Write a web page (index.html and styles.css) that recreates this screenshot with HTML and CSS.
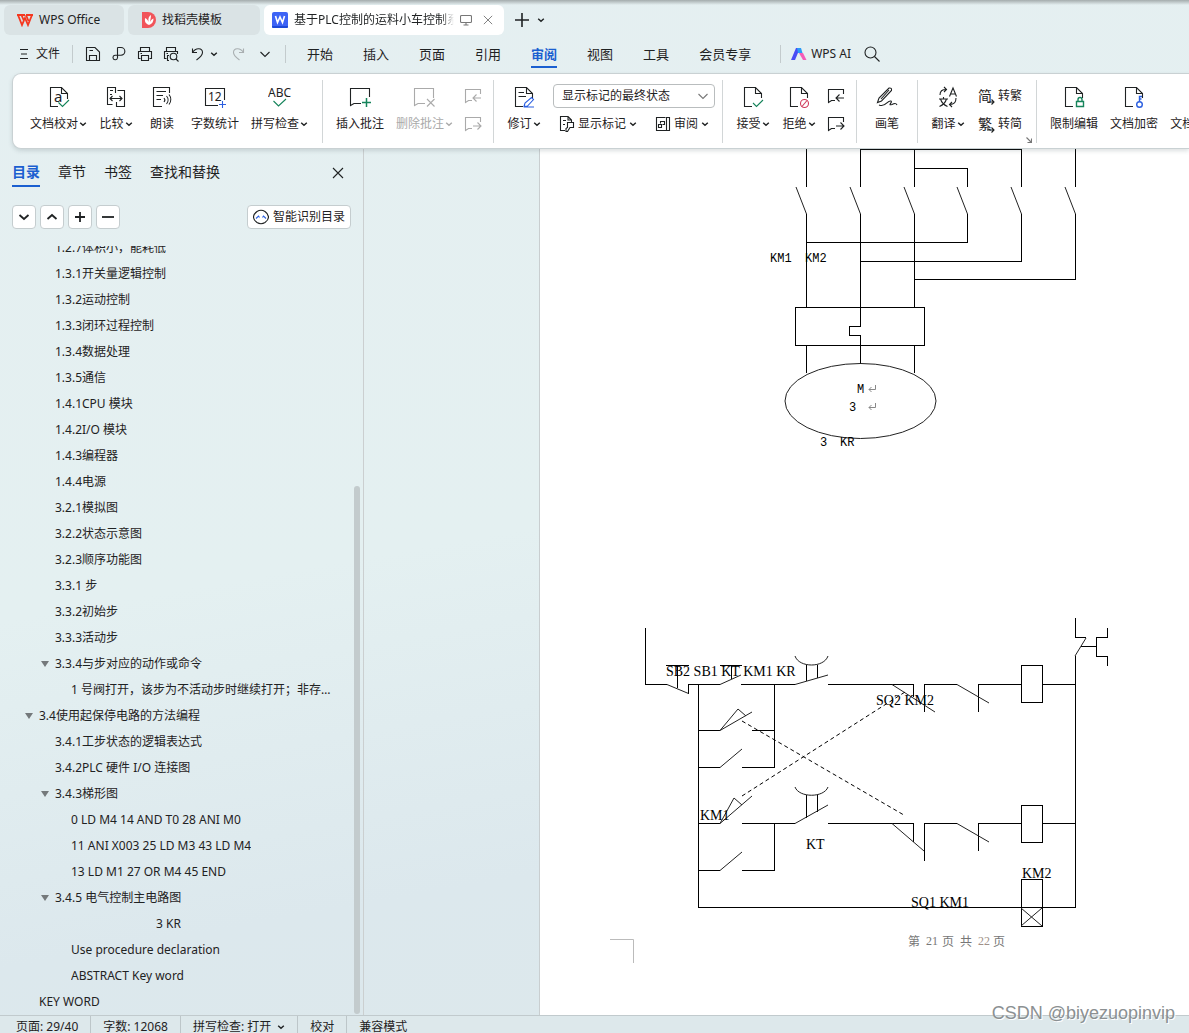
FILE: index.html
```
<!DOCTYPE html>
<html lang="zh-CN">
<head>
  <meta charset="UTF-8" />
  <meta name="viewport" content="width=device-width, initial-scale=1" />
  <title>基于PLC控制的运料小车控制系统 - WPS Office</title>
  <link rel="stylesheet" href="styles.css">
</head>
<body>

  <!-- Shared icons -->
  <svg class="sprite" aria-hidden="true">
    <symbol id="chev" viewBox="0 0 8 8"><path d="M1.2 2.8 4 5.2 6.8 2.8" stroke-width="1.5"/></symbol>
    <symbol id="chev-lg" viewBox="0 0 12 12"><path d="M1.5 4 6 8.5 10.500 4"/></symbol>
    <symbol id="close" viewBox="0 0 12 12"><path d="M1 1 11 11M11 1 1 11"/></symbol>
    <symbol id="doc" viewBox="0 0 24 24"><path d="M11 21.500H3.500V2.500H14.500L20.500 8.500V13M14.500 2.500V8.500H20.500"/></symbol>
    <symbol id="note-prev" viewBox="0 0 18 18"><path d="M16.500 7V2.500H1.500V15.500L4.500 13.500H8M17 11H9.500M12.500 7.500 9 11 12.500 14.500"/></symbol>
    <symbol id="note-next" viewBox="0 0 18 18"><path d="M16.500 7V2.500H1.500V15.500L4.500 13.500H8M9 11H16.500M13.500 7.500 17 11 13.500 14.500"/></symbol>
  </svg>

  <header>
    <div class="tabs">
      <button class="tab tab-home">
        <svg width="16" height="14" viewBox="0 0 16 14"><path d="M0 2H8M9 2H16M1 2 5 12 8 5 11 12 15 2M4.500 2 7 8M9 2 11.500 8" fill="none" stroke="#f5371f" stroke-width="1.800"/></svg>
        WPS Office
      </button>
      <button class="tab tab-tpl">
        <svg width="14" height="16" viewBox="0 0 14 16"><path d="M0 0H6A8 8 0 0 1 6 16H0Z" fill="#f1545a"/><path d="M7 13C2 11 3 8 3 6 5 7 6 8 6.500 10 6 6 7 4 9 3 9 5 8.500 7 8 10 9 8 10 7 11.500 6.500 11.500 10 10 12 7 13Z" fill="#fff"/></svg>
        找稻壳模板
      </button>
      <div class="tab tab-file">
        <svg width="16" height="16" viewBox="0 0 16 16"><rect width="16" height="16" rx="2" fill="#3d63f5"/><path d="M0 14H16V15A1 1 0 0 1 15 16H1A1 1 0 0 1 0 15Z" fill="#1d49d8"/><path d="M3.500 4 5.500 10.500 8 5 10.500 10.500 12.500 4" fill="none" stroke="#fff" stroke-width="1.600"/></svg>
        <span class="tab-name">基于PLC控制的运料小车控制系统</span>
        <svg class="ico muted" width="12" height="12" viewBox="0 0 12 12"><rect x="0.500" y="1.500" width="11" height="7" rx="1"/><path d="M6 8.500V11M3.500 11H8.500"/></svg>
        <button class="plain muted" aria-label="关闭标签"><svg class="ico" width="10" height="10"><use href="#close"/></svg></button>
      </div>
      <button class="plain add" aria-label="新建"><svg class="ico" width="14" height="14" viewBox="0 0 14 14"><path d="M7 0V14M0 7H14" stroke-width="1.600"/></svg></button>
      <button class="plain" aria-label="标签列表"><svg class="ico" width="8" height="8"><use href="#chev"/></svg></button>
    </div>

    <nav class="menu">
      <button class="plain file">
        <svg class="ico" width="10" height="12" viewBox="0 0 10 12"><path d="M1 1.500H9M2 6H8M1 10.500H9"/></svg>
        文件
      </button>
      <div class="quick">
        <button class="plain" aria-label="保存"><svg class="ico" width="16" height="16" viewBox="0 0 16 16"><path d="M1.500 14.500V1.500H10L14.500 6V14.500ZM4.500 14.500V9.500H11.500V14.500M4.500 4.500H8"/></svg></button>
        <button class="plain" aria-label="输出为PDF"><svg class="ico" width="16" height="16" viewBox="0 0 16 16"><path d="M6.500 1.500H10A3.800 3.800 0 0 1 10 9.200H4A2.300 2.300 0 1 0 6.500 12V1.500"/></svg></button>
        <button class="plain" aria-label="打印"><svg class="ico" width="16" height="16" viewBox="0 0 16 16"><path d="M3.500 5V1.500H12.500V5M3.500 12.500H1.500V5.500H14.500V12.500H12.500M4.500 9.500H11.500V14.500H4.500ZM3.500 7.500H5"/></svg></button>
        <button class="plain" aria-label="打印预览"><svg class="ico" width="16" height="16" viewBox="0 0 16 16"><path d="M3.500 5V1.500H12.500V5M3.500 12.500H1.500V5.500H14.500V8M3.500 7.500H5M6 14.500H4.500V9.500H6"/><circle cx="10.500" cy="10.500" r="3.300"/><path d="M13 13 15.500 15.500"/></svg></button>
        <button class="plain undo" aria-label="撤销"><svg class="ico" width="14" height="14" viewBox="0 0 14 14"><path d="M1.500 1.500V5.500H6M1.500 5.500C5 0 11.500 1 11.500 5.500 11.500 8 9 10.500 5.500 13"/></svg><svg class="ico" width="8" height="8"><use href="#chev"/></svg></button>
        <button class="plain redo" aria-label="恢复"><svg class="ico" width="14" height="14" viewBox="0 0 14 14"><path d="M12.500 1.500V5.500H8M12.500 5.500C9 0 2.500 1 2.500 5.500 2.500 8 5 10.500 8.500 13"/></svg></button>
        <button class="plain" aria-label="自定义"><svg class="ico" width="12" height="12"><use href="#chev-lg"/></svg></button>
      </div>
      <div class="menu-tabs">
        <a href="#">开始</a><a href="#">插入</a><a href="#">页面</a><a href="#">引用</a><a href="#" class="active">审阅</a><a href="#">视图</a><a href="#">工具</a><a href="#">会员专享</a>
      </div>
      <button class="plain ai">
        <svg width="16" height="12" viewBox="0 0 16 12"><path d="M5 0H9L4 12H0Z" fill="#4a4cf5"/><path d="M6 0H10L11.500 5H7Z" fill="#2a9cf7"/><path d="M8 5H12L15.500 12H12Z" fill="#f45cb8"/></svg>
        WPS AI
      </button>
      <button class="plain" aria-label="搜索"><svg class="ico" width="18" height="18" viewBox="0 0 18 18"><circle cx="7.500" cy="7.500" r="5.500"/><path d="M11.500 11.500 16.500 16.500"/></svg></button>
    </nav>
  </header>

  <section class="ribbon">
    <div class="group proof">
      <button class="tool"><svg class="ico" width="24" height="24" viewBox="0 0 24 24"><path d="M11 21.500H3.500V2.500H14.500L20.500 8.500V14M14.500 2.500V8.500H20.500"/><text x="7" y="17" class="ico-text a">a</text><path class="green" d="M11.500 17.500 15.500 21.500 22 15"/></svg><span>文档校对<svg class="ico" width="8" height="8"><use href="#chev"/></svg></span></button>
      <button class="tool"><svg class="ico" width="24" height="24" viewBox="0 0 24 24"><path d="M11.500 8V2.500H3.500V19.500H8.500M12.500 17V21.500H20.500V5.500H13.500M6 5.500H9M6 9.500H8M6 13.500H18M8.500 11 6 13.500 8.500 16M15.500 11 18 13.500 15.500 16"/></svg><span>比较<svg class="ico" width="8" height="8"><use href="#chev"/></svg></span></button>
      <button class="tool"><svg class="ico" width="24" height="24" viewBox="0 0 24 24"><path d="M12 21.500H3.500V2.500H19.500V8M6.500 6.500H16M6.500 10.500H13M6.500 14.500H11M14 13A3 3 0 0 1 14 17M16.500 11A6 6 0 0 1 16.500 19M19 9.500A8 8 0 0 1 19 19.500"/></svg><span>朗读</span></button>
      <button class="tool"><svg class="ico" width="24" height="24" viewBox="0 0 24 24"><path d="M15 20.500H2.500V3.500H21.500V15"/><text x="5" y="16" class="ico-text">12</text><path class="blue" d="M19.500 16V23M16 19.500H23"/></svg><span>字数统计</span></button>
      <button class="tool"><svg class="ico" width="24" height="24" viewBox="0 0 24 24"><text x="0" y="12" class="ico-text">ABC</text><path class="green" d="M5.500 16 10.500 21 18 14"/></svg><span>拼写检查<svg class="ico" width="8" height="8"><use href="#chev"/></svg></span></button>
    </div>

    <div class="group">
      <button class="tool"><svg class="ico" width="24" height="24" viewBox="0 0 24 24"><path d="M21.500 12V3.500H2.500V20.500L6 18.500H13"/><path class="green" stroke-width="1.500" d="M18.500 13V22M14 17.500H23"/></svg><span>插入批注</span></button>
      <button class="tool off" disabled><svg class="ico" width="24" height="24" viewBox="0 0 24 24"><path d="M20.500 13V3.500H1.500V20.500L5 18.500H12M14 14 21.500 21.500M21.500 14 14 21.500"/></svg><span>删除批注<svg class="ico" width="8" height="8"><use href="#chev"/></svg></span></button>
      <div class="stack off">
        <button class="plain" disabled aria-label="上一条批注"><svg class="ico" width="18" height="18"><use href="#note-prev"/></svg></button>
        <button class="plain" disabled aria-label="下一条批注"><svg class="ico" width="18" height="18"><use href="#note-next"/></svg></button>
      </div>
    </div>

    <div class="group">
      <button class="tool"><svg class="ico" width="24" height="24" viewBox="0 0 24 24"><use href="#doc"/><path d="M6.500 7.500H12M6.500 11.500H14"/><path class="blue" d="M12 21.500 13 18 19.500 12.500 21.500 14.500 15.500 21ZM12 22H22"/></svg><span>修订<svg class="ico" width="8" height="8"><use href="#chev"/></svg></span></button>
      <div class="markup">
        <div class="select-box">
          <select aria-label="标记显示方式"><option>显示标记的最终状态</option></select>
          <svg class="ico muted" width="12" height="12"><use href="#chev-lg"/></svg>
        </div>
        <div class="markup-row">
          <button class="plain"><svg class="ico" width="16" height="16" viewBox="0 0 16 16"><path d="M6 14.500H1.500V0.500H9L12.500 4V6M9 0.500V4H12.500M4 4.500H7M4 8.500H6M8.500 6.500H14.500V11.500H11L8.500 15.500H7V12.500L8.500 11.500Z"/></svg>显示标记<svg class="ico" width="8" height="8"><use href="#chev"/></svg></button>
          <button class="plain"><svg class="ico" width="16" height="16" viewBox="0 0 16 16"><path d="M10.500 1.500H1.500V14.500H14.500V1.500H11.500V14.500M5.500 7.500V5.500H9.500V8.500H7.500M3.500 8.500H6.500V11.500H3.500Z"/></svg>审阅<svg class="ico" width="8" height="8"><use href="#chev"/></svg></button>
        </div>
      </div>
    </div>

    <div class="group">
      <button class="tool"><svg class="ico" width="24" height="24" viewBox="0 0 24 24"><use href="#doc"/><path class="green" d="M12 18 15.500 21.500 22 15"/></svg><span>接受<svg class="ico" width="8" height="8"><use href="#chev"/></svg></span></button>
      <button class="tool"><svg class="ico" width="24" height="24" viewBox="0 0 24 24"><use href="#doc"/><g class="red"><circle cx="17.500" cy="18.500" r="4"/><path d="M15 21.500 20 15.500"/></g></svg><span>拒绝<svg class="ico" width="8" height="8"><use href="#chev"/></svg></span></button>
      <div class="stack">
        <button class="plain" aria-label="上一条修订"><svg class="ico" width="18" height="18"><use href="#note-prev"/></svg></button>
        <button class="plain" aria-label="下一条修订"><svg class="ico" width="18" height="18"><use href="#note-next"/></svg></button>
      </div>
    </div>

    <div class="group">
      <button class="tool"><svg class="ico" width="24" height="24" viewBox="0 0 24 24"><path d="M2.500 17.500 4 13 14 3Q17 2.500 16.500 5.500L6.500 16ZM6 14 14 5M4 20C11 23 12 15 16 16 18 17 12 21 17 19.500 20 18 21 18 22 20"/></svg><span>画笔</span></button>
    </div>

    <div class="group">
      <button class="tool"><svg class="ico" width="24" height="24" viewBox="0 0 24 24"><path d="M4 10C4 6 6 4.500 10 4.500M8 2 10.500 4.500 8 7M20 13C20 18 18 19.500 14 19.500M16 17 13.500 19.500 16 22M13.500 11.500 17 3 20.500 11.500M14.500 9H19.500M3 14H12M7.500 12V14M10.500 14Q9 19 3.500 21.500M4.500 14Q6 19 11.500 21.500"/></svg><span>翻译<svg class="ico" width="8" height="8"><use href="#chev"/></svg></span></button>
      <div class="stack convert">
        <button class="plain"><span class="glyph">简<svg class="ico" width="8" height="6" viewBox="0 0 8 6"><path d="M0 3H7M4.500 0.500 7 3 4.500 5.500"/></svg></span>转繁</button>
        <button class="plain"><span class="glyph">繁<svg class="ico" width="8" height="6" viewBox="0 0 8 6"><path d="M0 3H7M4.500 0.500 7 3 4.500 5.500"/></svg></span>转简</button>
      </div>
      <button class="plain launcher muted" aria-label="更多选项"><svg class="ico" width="6" height="6" viewBox="0 0 6 6"><path d="M0.500 0.500 5 5M5.500 1.500V5.500H1.500"/></svg></button>
    </div>

    <div class="group">
      <button class="tool"><svg class="ico" width="24" height="24" viewBox="0 0 24 24"><use href="#doc"/><path class="green lock" d="M14.500 16.500H21.500V21.500H14.500ZM16 16.500V14.500A2 2 0 0 1 20 14.500V16.500"/></svg><span>限制编辑</span></button>
      <button class="tool"><svg class="ico" width="24" height="24" viewBox="0 0 24 24"><use href="#doc"/><g class="blue lock"><circle cx="17.500" cy="19.500" r="2.800"/><path d="M17.500 16.500V11.500H20M17.500 14H19.500"/></g></svg><span>文档加密</span></button>
      <button class="tool"><svg class="ico" width="24" height="24" viewBox="0 0 24 24"></svg><span>文档定稿</span></button>
    </div>
  </section>

  <main>
    <aside>
      <div class="side-tabs">
        <a href="#" class="active">目录</a><a href="#">章节</a><a href="#">书签</a><a href="#">查找和替换</a>
        <button class="plain" aria-label="关闭"><svg class="ico" width="12" height="12"><use href="#close"/></svg></button>
      </div>
      <div class="side-tools">
        <button aria-label="展开"><svg class="ico" width="12" height="12" viewBox="0 0 12 12"><path d="M1.500 4 6 8 10.500 4"/></svg></button>
        <button aria-label="收起"><svg class="ico" width="12" height="12" viewBox="0 0 12 12"><path d="M1.500 8 6 4 10.500 8"/></svg></button>
        <button aria-label="增加级别"><svg class="ico" width="12" height="12" viewBox="0 0 12 12"><path d="M6 1V11M1 6H11"/></svg></button>
        <button aria-label="减少级别"><svg class="ico" width="12" height="12" viewBox="0 0 12 12"><path d="M0 6H12"/></svg></button>
        <button class="smart"><svg class="ico" width="16" height="16" viewBox="0 0 16 16"><path d="M4 2.500Q8 0 12 2.500 15.500 5 15.500 8 15.500 11 12 13.500 8 16 4 13.500 0.500 11 0.500 8 0.500 5 4 2.500Z"/><path class="blue" d="M3 9.500 5.500 7 6.500 8.500M9.500 8.500 10.500 7 13 9.500"/></svg>智能识别目录</button>
      </div>
      <div class="toc">
        <ul>
          <li class="l3"><a href="#">1.2.7体积小，能耗低</a></li>
          <li class="l3"><a href="#">1.3.1开关量逻辑控制</a></li>
          <li class="l3"><a href="#">1.3.2运动控制</a></li>
          <li class="l3"><a href="#">1.3.3闭环过程控制</a></li>
          <li class="l3"><a href="#">1.3.4数据处理</a></li>
          <li class="l3"><a href="#">1.3.5通信</a></li>
          <li class="l3"><a href="#">1.4.1CPU 模块</a></li>
          <li class="l3"><a href="#">1.4.2I/O 模块</a></li>
          <li class="l3"><a href="#">1.4.3编程器</a></li>
          <li class="l3"><a href="#">1.4.4电源</a></li>
          <li class="l3"><a href="#">3.2.1模拟图</a></li>
          <li class="l3"><a href="#">3.2.2状态示意图</a></li>
          <li class="l3"><a href="#">3.2.3顺序功能图</a></li>
          <li class="l3"><a href="#">3.3.1 步</a></li>
          <li class="l3"><a href="#">3.3.2初始步</a></li>
          <li class="l3"><a href="#">3.3.3活动步</a></li>
          <li class="l3 open"><a href="#">3.3.4与步对应的动作或命令</a></li>
          <li class="l4"><a href="#">1 号阀打开，该步为不活动步时继续打开；非存储型命令</a></li>
          <li class="l2 open"><a href="#">3.4使用起保停电路的方法编程</a></li>
          <li class="l3"><a href="#">3.4.1工步状态的逻辑表达式</a></li>
          <li class="l3"><a href="#">3.4.2PLC 硬件 I/O 连接图</a></li>
          <li class="l3 open"><a href="#">3.4.3梯形图</a></li>
          <li class="l4"><a href="#">0 LD M4 14 AND T0 28 ANI M0</a></li>
          <li class="l4"><a href="#">11 ANI X003 25 LD M3 43 LD M4</a></li>
          <li class="l4"><a href="#">13 LD M1 27 OR M4 45 END</a></li>
          <li class="l3 open"><a href="#">3.4.5 电气控制主电路图</a></li>
          <li class="indent"><a href="#">3 KR</a></li>
          <li class="l4"><a href="#">Use procedure declaration</a></li>
          <li class="l4"><a href="#">ABSTRACT Key word</a></li>
          <li class="l2"><a href="#">KEY WORD</a></li>
        </ul>
      </div>
      <div class="scrollbar"></div>
    </aside>

    <div class="workspace">
      <div class="page">
        <svg class="circuit" width="649" height="866" viewBox="540 149 649 866">
          <!-- Main circuit -->
          <g class="wire">
            <path d="M806.500 149V187M860.500 187V149.500H1021.500V187M914.500 149V187M914.500 168.500H967.500V187M1075.500 149V187"/>
            <path d="M806.500 214V307M860.500 214V326.500H849.500V335.500H860.500V364M914.500 214V307"/>
            <path d="M967.500 214V242.500H806.500M1021.500 214V261.500H860.500M1075.500 214V279.500H914.500"/>
            <rect x="795.500" y="307.500" width="129" height="38"/>
            <path d="M806.500 345V373M914.500 345V373"/>
          </g>
          <g class="blade">
            <path d="M796 187 806.500 214M850 187 860.500 214M904 187 914.500 214M957 187 967.500 214M1011 187 1021.500 214M1065 187 1075.500 214"/>
            <ellipse cx="860.500" cy="401" rx="75.500" ry="37.500"/>
          </g>
          <g class="mono">
            <text x="770" y="262">KM1</text><text x="805" y="262">KM2</text>
            <text x="857" y="393">M</text><text x="849" y="411">3</text>
            <text x="820" y="446">3</text><text x="840" y="446">KR</text>
          </g>
          <path class="mark" d="M875.500 385V389.500H869M871.500 387 869 389.500 871.500 392M875.500 403V407.500H869M871.500 405 869 407.500 871.500 410"/>

          <!-- Control circuit -->
          <g class="wire">
            <path d="M645.500 628V684.500H667M688.500 694V684.500H720M666 665.500H689M677.500 665V688M720 665.500H742M731.500 665V679"/>
            <path d="M741 684.500H795M806.500 665V681M817.500 665V678M828 684.500H913.500"/>
            <path d="M698.500 684V907.500H1075.500V656M774.500 684V767.500H742M698 730.500H720M752 730.500H774M698 767.500H720"/>
            <path d="M698 823.500H720M742 823.500H795M774.500 823V870.500H742M698 870.500H720M806.500 795V818M817.500 795V812M828 823.500H913.500V842"/>
            <path d="M924.500 712V684.500H957M978.500 712V684.500H1021M1042 684.500H1075M924.500 861V823.500H957M978.500 851V823.500H1021M1042 823.500H1075"/>
            <path d="M1075.500 618V637.500H1086M1107.500 628V637.500H1096.500V656.500H1107.500V666M1081 646.500H1096M913.500 684V697"/>
            <rect x="1021.500" y="665.500" width="21" height="37"/>
            <rect x="1021.500" y="805.500" width="21" height="37"/>
            <rect x="1021.500" y="879.500" width="21" height="47"/>
          </g>
          <g class="blade">
            <path d="M667 684.500 688.500 693.500M720 684.500 741 675M795 684.500 828 675M795 656C799 668 824 668 828 656"/>
            <path d="M752 712 720 730.500 738 709 746 716M720 767.500 742 749M752 796 720 823.500 734 798 742 805M720 870.500 742 852"/>
            <path d="M795 823.500 828 805M795 787C799 798 824 798 828 787"/>
            <path d="M892 684.500 935 712M957 684.500 989 703M892 823.500 924 851M957 823.500 989 842M1086 638 1075 656M1021 908 1042 926M1042 908 1021 926"/>
          </g>
          <path class="link" d="M742 721 903 814.500M742 796 905 692"/>
          <g class="serif">
            <text x="666" y="676">SB2 SB1 KT KM1 KR</text>
            <text x="876" y="705">SQ2 KM2</text>
            <text x="700" y="820">KM1</text>
            <text x="806" y="849">KT</text>
            <text x="1022" y="878">KM2</text>
            <text x="911" y="907">SQ1 KM1</text>
          </g>

          <!-- Page footer -->
          <path class="corner" d="M610 939.500H633.500V963"/>
          <g class="folio">
            <text x="908" y="946">第</text><text x="926" y="945">21</text><text x="942" y="946">页</text><text x="960" y="946">共</text><text x="978" y="945" class="total">22</text><text x="993" y="946">页</text>
          </g>
        </svg>
      </div>
    </div>
  </main>

  <footer>
    <span>页面: 29/40</span>
    <span>字数: 12068</span>
    <span>拼写检查: 打开<svg class="ico" width="8" height="8"><use href="#chev"/></svg></span>
    <span>校对</span>
    <span>兼容模式</span>
  </footer>
  <div class="watermark">CSDN @biyezuopinvip</div>

</body>
</html>
```

FILE: styles.css
```
* {
  box-sizing: border-box;
}

body {
  margin: 0;
  height: 100vh;
  display: flex;
  flex-direction: column;
  overflow: hidden;
  position: relative;
  font-family: "Noto Sans", "Noto Sans CJK SC", sans-serif;
  font-size: 12px;
  line-height: 18px;
  color: #1f2223;
  background: linear-gradient(170deg, #e5eff1 0%, #e4f0f1 50%, #dce8ed 78%, #dde8eb 100%);
}

button,
select {
  font: inherit;
  color: inherit;
  white-space: nowrap;
}

a {
  color: inherit;
  text-decoration: none;
}

.sprite {
  position: absolute;
  width: 0;
  height: 0;
}

.ico {
  flex: none;
  fill: none;
  stroke: currentColor;
  stroke-width: 1.1;
}

.green {
  stroke: #16845b;
}

.blue {
  stroke: #2b5fe0;
}

.red {
  stroke: #d03a5b;
}

.lock {
  stroke-width: 1.4;
}

.muted {
  color: #777;
}

.plain {
  display: flex;
  align-items: center;
  padding: 0;
  border: 0;
  background: none;
}

/* Document tabs */
.tabs {
  display: flex;
  align-items: center;
  gap: 4px;
  padding: 5px 4px 0;
  background: linear-gradient(#a4acad, #e5eff100 5px);
}

.tab {
  display: flex;
  align-items: center;
  gap: 6px;
  height: 30px;
  border: 0;
  border-radius: 6px;
  background: #dae3e5;
}

.tab-home {
  width: 120px;
  padding: 0 13px;
}

.tab-tpl {
  width: 132px;
  padding: 0 14px;
}

.tab-file {
  width: 240px;
  padding: 0 11px 0 8px;
  background: #fff;
}

.tab-name {
  flex: 1;
  overflow: hidden;
  white-space: nowrap;
  mask-image: linear-gradient(90deg, #000 92%, transparent);
}

.tab-file .plain {
  margin-left: 5px;
}

.add {
  margin: 0 4px 0 7px;
}

/* Menu */
.menu {
  display: flex;
  align-items: center;
  height: 38px;
  padding-left: 19px;
}

.file {
  gap: 7px;
}

.quick {
  display: flex;
  align-items: center;
  gap: 10px;
  height: 18px;
  margin-left: 12px;
  padding: 0 14px 0 12px;
  border-left: 1px solid #c3cbcd;
  border-right: 1px solid #c3cbcd;
}

.undo {
  gap: 5px;
  margin-left: 2px;
}

.redo {
  margin: 0 4px 0 3px;
  color: #a9afb1;
}

.menu-tabs {
  display: flex;
  gap: 30px;
  margin: 0 29px 0 21px;
  font-size: 13px;
}

.menu-tabs a {
  line-height: 24px;
  border-top: 2px solid transparent;
  border-bottom: 2px solid transparent;
}

.menu-tabs .active,
.side-tabs .active {
  font-weight: 700;
  color: #1b5fd0;
  border-bottom-color: #1b5fd0;
}

.ai {
  gap: 4px;
  margin-right: 12px;
  padding-left: 10px;
  border-left: 1px solid #c3cbcd;
}

/* Ribbon */
.ribbon {
  display: flex;
  flex: none;
  height: 76px;
  margin-left: 12px;
  padding: 6px 0 5px 4px;
  overflow: hidden;
  position: relative;
  z-index: 1;
  background: #fff;
  border: 1px solid #c9d1d3;
  border-right: 0;
  border-radius: 9px 0 0 9px;
  box-shadow: 0 2px 4px rgba(80, 100, 105, 0.2);
}

.group {
  display: flex;
  flex: none;
  padding: 0 7px;
  border-right: 1px solid #d2d6d7;
  position: relative;
}

.proof {
  padding-right: 8px;
}

.tool {
  display: flex;
  flex-direction: column;
  align-items: center;
  gap: 6px;
  min-width: 46px;
  padding: 5px 6px 0;
  border: 0;
  background: none;
}

.tool span {
  display: flex;
  align-items: center;
  gap: 1px;
}

.off,
.off button {
  color: #aaa;
}

.ico-text {
  fill: currentColor;
  stroke: none;
  font-size: 12px;
}

.ico-text.a {
  font-size: 15px;
}

.stack {
  display: flex;
  flex-direction: column;
  gap: 10px;
  padding: 7px 4px 0 5px;
}

.convert {
  padding: 7px 7px 0;
}

.convert .plain {
  gap: 3px;
}

.glyph {
  display: flex;
  align-items: flex-end;
  font-size: 14px;
  height: 18px;
}

.glyph .ico {
  margin-left: -5px;
}

.launcher {
  position: absolute;
  right: 4px;
  bottom: 0;
}

.markup {
  display: flex;
  flex-direction: column;
  gap: 7px;
  padding: 4px 0 0 6px;
}

.select-box {
  position: relative;
}

.select-box select {
  display: block;
  width: 162px;
  height: 24px;
  padding: 0 8px;
  appearance: none;
  background: #fff;
  border: 1px solid #b9bdbe;
  border-radius: 4px;
}

.select-box .ico {
  position: absolute;
  right: 6px;
  top: 6px;
  pointer-events: none;
}

.markup-row {
  display: flex;
  justify-content: space-between;
  padding: 0 6px;
}

.markup-row .plain {
  gap: 3px;
}

/* Navigation pane */
main {
  display: flex;
  flex: 1;
  min-height: 0;
}

aside {
  display: flex;
  flex-direction: column;
  flex: none;
  width: 364px;
  border-right: 1px solid #cbcfd0;
  position: relative;
}

.side-tabs {
  display: flex;
  flex: none;
  align-items: center;
  gap: 18px;
  padding: 10px 19px 0 12px;
  font-size: 14px;
}

.side-tabs a {
  line-height: 26px;
  border-bottom: 2px solid transparent;
}

.side-tabs .plain {
  margin-left: auto;
}

.side-tools {
  display: flex;
  flex: none;
  gap: 4px;
  padding: 18px 12px 17px;
}

.side-tools button {
  display: flex;
  align-items: center;
  justify-content: center;
  gap: 4px;
  width: 24px;
  height: 24px;
  padding: 0;
  background: #fff;
  border: 1px solid #c5cdcf;
  border-radius: 4px;
}

.side-tools button:not(.smart) .ico {
  stroke-width: 1.8;
}

.side-tools .smart {
  width: 104px;
  margin-left: auto;
}

.toc {
  flex: 1;
  min-height: 0;
  overflow: hidden;
}

/* list is scrolled part of a row down */
.toc ul {
  margin: -11px 0 0;
  padding: 0;
  list-style: none;
}

.toc li {
  display: flex;
  align-items: center;
  height: 26px;
  padding-right: 24px;
}

.toc a {
  overflow: hidden;
  white-space: nowrap;
  text-overflow: ellipsis;
}

.l2 {
  padding-left: 39px;
}

.l3 {
  padding-left: 55px;
}

.l4 {
  padding-left: 71px;
}

.indent {
  padding-left: 156px;
}

.open::before {
  content: "";
  margin: 0 6px 0 -14px;
  border: 4px solid transparent;
  border-top: 6px solid #74797b;
  border-bottom: 0;
}

.scrollbar {
  position: absolute;
  right: 3px;
  bottom: 1px;
  width: 6px;
  height: 61%;
  border-radius: 3px;
  background: #c3cbcd;
}

/* Document */
.workspace {
  flex: 1;
  min-width: 0;
  padding-left: 175px;
  overflow: hidden;
}

.page {
  height: 100%;
  background: #fff;
  border-left: 1px solid #c9ced0;
}

.circuit {
  display: block;
}

.circuit path,
.circuit rect,
.circuit ellipse {
  fill: none;
}

.wire {
  stroke: #000;
  shape-rendering: crispEdges;
}

.blade {
  stroke: #222;
}

.link {
  stroke: #000;
  stroke-dasharray: 4 3;
}

.mark {
  stroke: #888;
}

.corner {
  stroke: #bbb;
}

.mono {
  font: 12px "Liberation Mono", monospace;
}

.serif {
  font: 14px "Liberation Serif", serif;
}

.folio {
  font: 12px "Liberation Serif", "Noto Sans CJK SC", serif;
  fill: #777;
}

.total {
  fill: #a09088;
}

/* Status bar */
footer {
  display: flex;
  flex: none;
  height: 18px;
  padding-left: 4px;
  line-height: 22px;
  border-top: 1px solid #c1cacd;
  background: #dde8eb;
}

footer span {
  display: flex;
  align-items: center;
  gap: 6px;
  height: 22px;
  padding: 0 12px;
}

footer span + span {
  border-left: 1px solid #bdc6c9;
}

.watermark {
  position: absolute;
  right: 14px;
  bottom: 8px;
  font: 18px/24px "Liberation Sans", sans-serif;
  color: #8b9092;
  text-shadow: 1px 1px 0 #fff;
}
```
